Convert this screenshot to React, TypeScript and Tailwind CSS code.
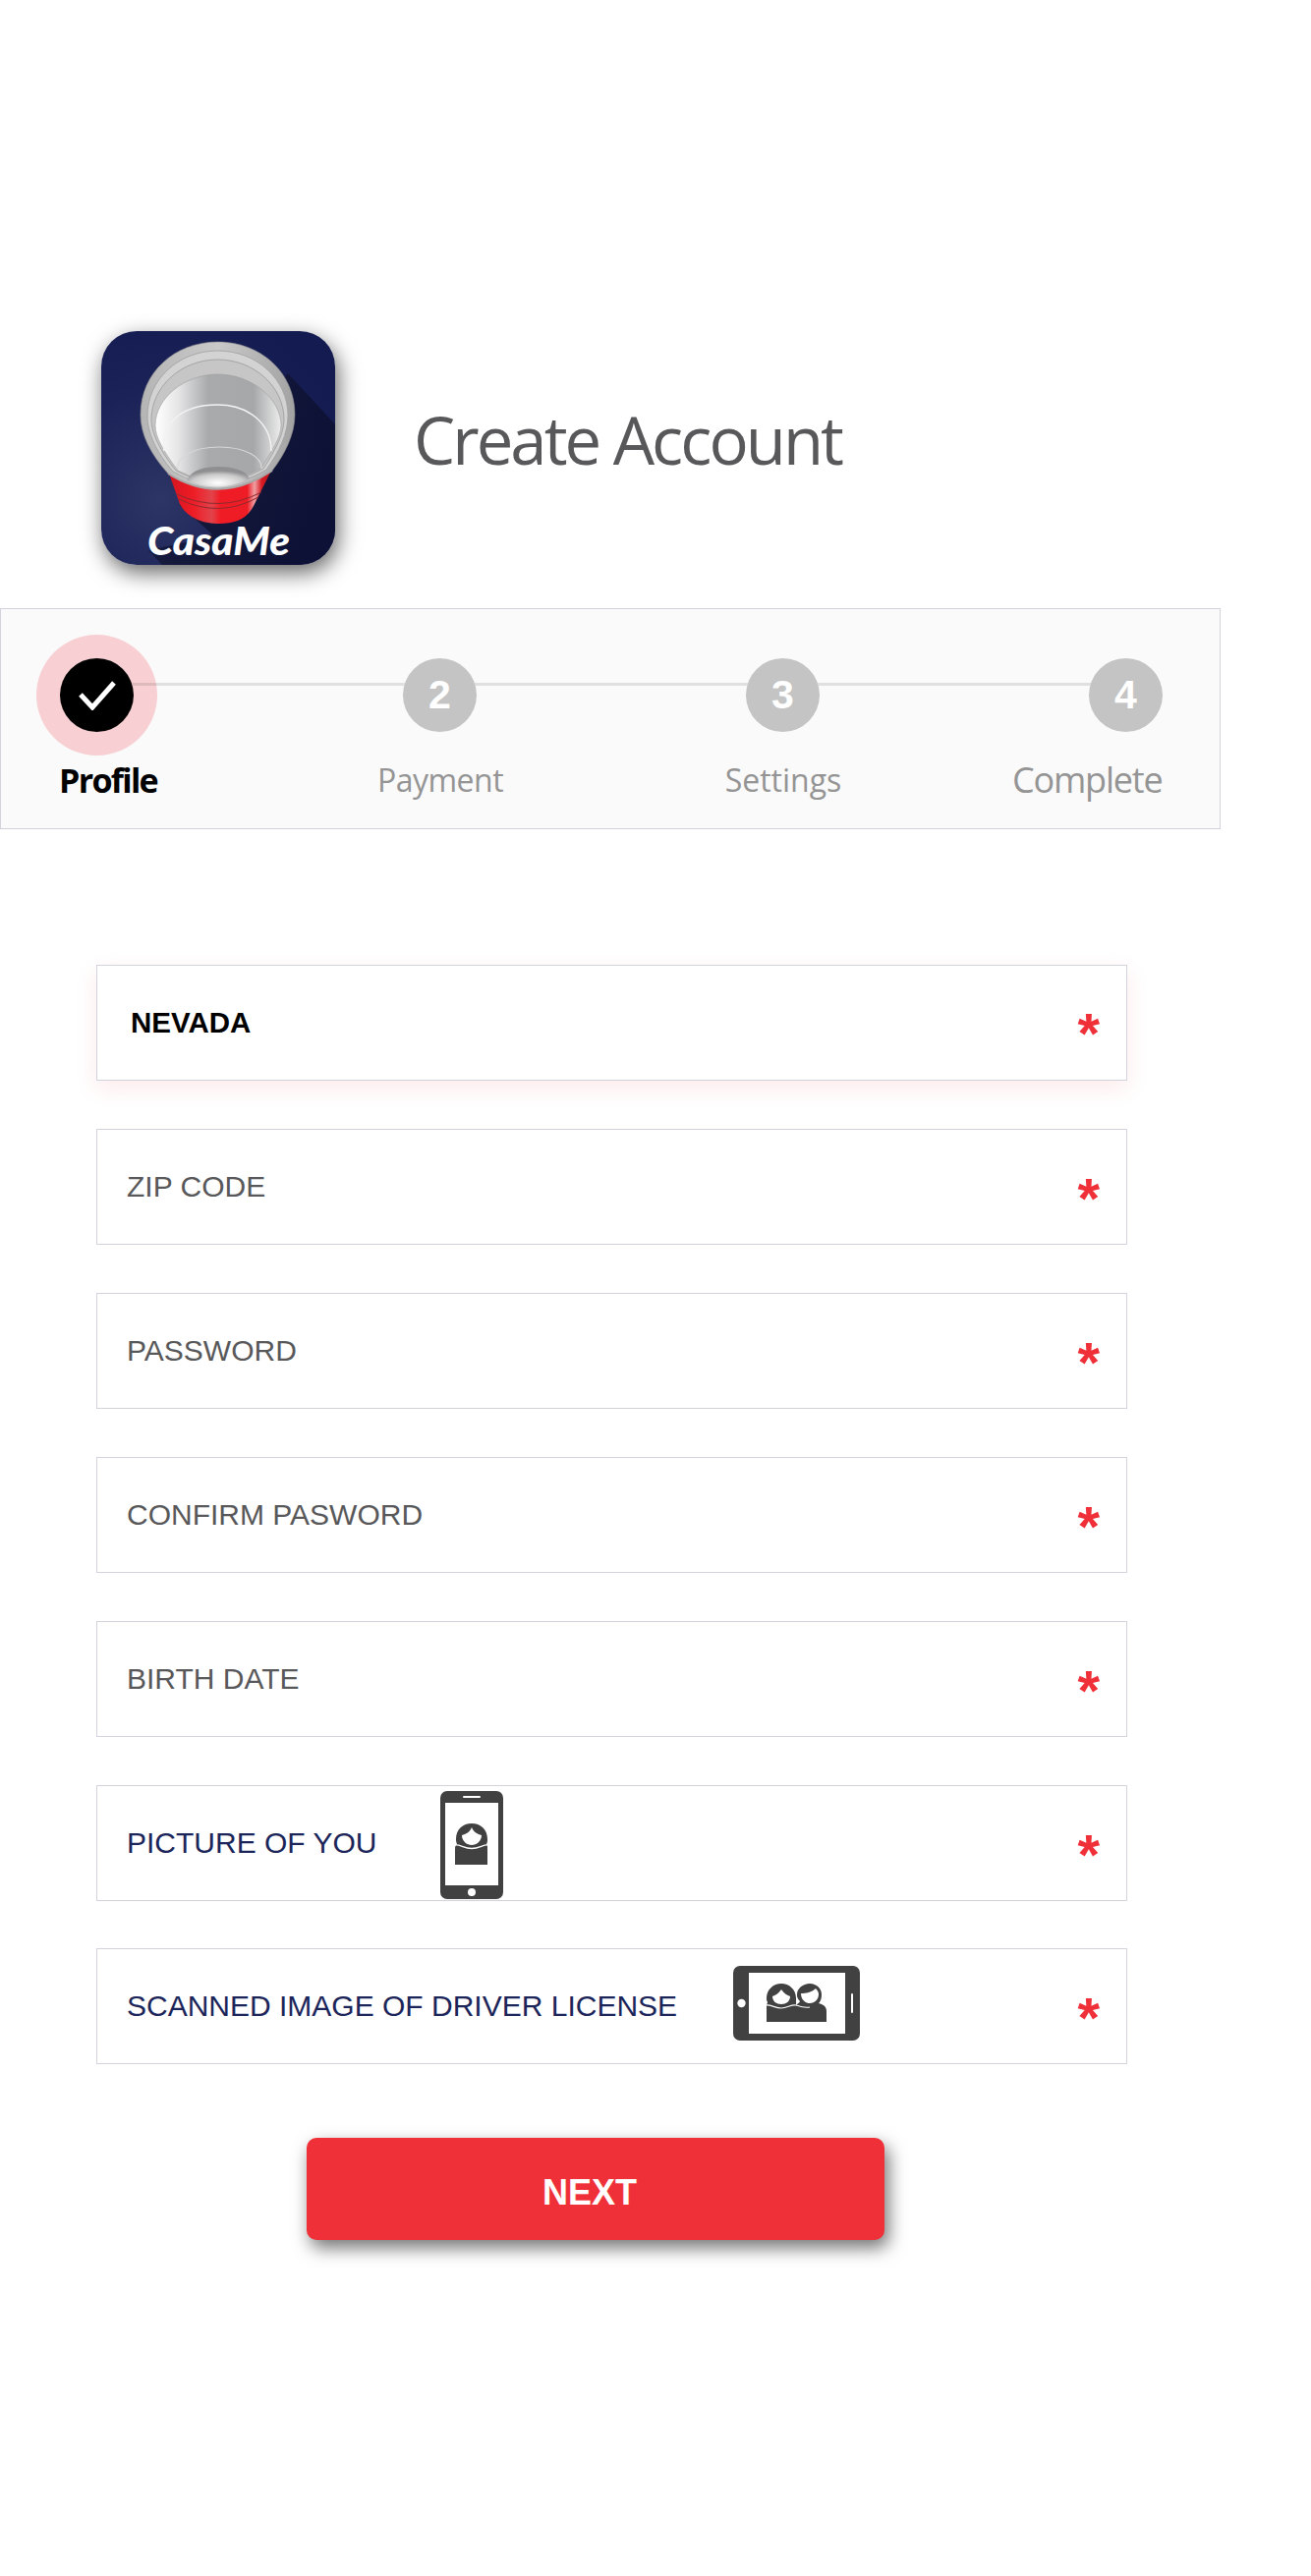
import React from "react";

const sans = "font-['Liberation_Sans',Arial,sans-serif]";
const humanist = "font-['Open_Sans','Noto_Sans',sans-serif]";

function Logo() {
  return (
    <svg width="238" height="238" viewBox="0 0 238 238" className="block">
      <defs>
        <radialGradient id="bg" cx="25%" cy="72%" r="85%">
          <stop offset="0%" stopColor="#2d3566" />
          <stop offset="55%" stopColor="#1a2257" />
          <stop offset="100%" stopColor="#141b50" />
        </radialGradient>
        <linearGradient id="sh" x1="0" y1="0" x2="1" y2="0.3">
          <stop offset="0%" stopColor="#1a1f40" />
          <stop offset="100%" stopColor="#0d1135" />
        </linearGradient>
        <linearGradient id="inner" x1="0" y1="0" x2="1" y2="0">
          <stop offset="0%" stopColor="#ffffff" />
          <stop offset="18%" stopColor="#e6e6e7" />
          <stop offset="42%" stopColor="#a9aaac" />
          <stop offset="78%" stopColor="#a6a7a9" />
          <stop offset="100%" stopColor="#ededed" />
        </linearGradient>
        <linearGradient id="rim" x1="0" y1="0" x2="1" y2="0">
          <stop offset="0%" stopColor="#b5b5b5" />
          <stop offset="50%" stopColor="#c9c9c9" />
          <stop offset="100%" stopColor="#a3a3a3" />
        </linearGradient>
        <linearGradient id="red" x1="0" y1="0" x2="1" y2="0">
          <stop offset="0%" stopColor="#d3151f" />
          <stop offset="24%" stopColor="#ee1c25" />
          <stop offset="42%" stopColor="#e2434b" />
          <stop offset="50%" stopColor="#f01c25" />
          <stop offset="76%" stopColor="#ee1c25" />
          <stop offset="83%" stopColor="#f0a0a4" />
          <stop offset="90%" stopColor="#d81a22" />
          <stop offset="100%" stopColor="#b9141c" />
        </linearGradient>
        <radialGradient id="bottom" cx="50%" cy="80%" r="60%">
          <stop offset="0%" stopColor="#ffffff" />
          <stop offset="70%" stopColor="#c9c9ca" />
          <stop offset="100%" stopColor="#8f8f91" />
        </radialGradient>
        <clipPath id="clip">
          <rect width="238" height="238" rx="36" />
        </clipPath>
      </defs>
      <g clipPath="url(#clip)">
        <rect width="238" height="238" fill="url(#bg)" />
        <polygon points="190,43 238,95 238,238 62,238 48,223 100,212 113,207 80,177" fill="url(#sh)" />
        <path d="M68 142 L80 176 C88 191 105 196 120 196 C135 196 148 192 155 178 L174 140 Z" fill="url(#red)" />
        <path d="M77 166 Q120 186 163 164" stroke="#8c2a30" strokeWidth="1" fill="none" />
        <path d="M79 171 Q120 191 160 169" stroke="#8c2a30" strokeWidth="1" fill="none" />
        <path d="M68 145 C50 125 40 105 40 85 C40 42 75 11 118.5 11 C162 11 197 42 197 85 C197 105 187 125 174 142 Q120 178 68 145 Z" fill="url(#rim)" stroke="#8f8f8f" strokeWidth="0.6" />
        <path d="M73 143 C56 123 47 104 47 86 C47 50 78 20 118.5 20 C159 20 190 50 190 86 C190 104 181 123 168 141 Q120 170 73 143 Z" fill="#d3d3d3" stroke="#a0a0a0" strokeWidth="0.8" />
        <path d="M76 142 C60 122 51 104 51 90 C51 57 81 29 118.5 29 C156 29 186 57 186 90 C186 104 177 122 165 140 Q120 166 76 142 Z" fill="#c6c6c6" stroke="#9a9a9a" strokeWidth="0.8" />
        <path d="M78 142 C63 122 55 108 55 96 C55 68 85 44 118.5 44 C152 44 183 68 183 96 C183 108 174 122 162 140 Q120 164 78 142 Z" fill="url(#inner)" stroke="#9c9c9c" strokeWidth="0.6" />
        <path d="M64 122 C60 94 82 75 118 75 C150 75 173 94 173 122" fill="none" stroke="#f2f2f2" strokeWidth="1.5" />
        <path d="M78 140 C76 128 94 118 120 118 C146 118 164 128 163 140" fill="none" stroke="#d8d8d8" strokeWidth="1.2" />
        <path d="M87 152 C92 141 105 138 119 138 C133 138 146 141 151 150 Q120 166 87 152 Z" fill="url(#bottom)" />
        <path d="M68 145 Q120 178 174 142" fill="none" stroke="#a8a8a8" strokeWidth="2" />
        <text x="47" y="228" fill="#ffffff" fontSize="40" fontWeight="900" fontStyle="italic" fontFamily="Lato, 'Open Sans', sans-serif" textLength="145" lengthAdjust="spacingAndGlyphs">CasaMe</text>
      </g>
    </svg>
  );
}

function PhoneIcon() {
  return (
    <svg width="64" height="110" viewBox="0 0 64 110" className="block shrink-0">
      <rect width="64" height="110" rx="7" fill="#414141" />
      <rect x="5" y="12" width="54" height="84" fill="#fff" />
      <rect x="23" y="5" width="18" height="2" rx="1" fill="#fff" />
      <circle cx="32" cy="103" r="4" fill="#fff" />
      <path d="M15 75 V58 C15 56 16 55 17 54 C16 52 16 50 16 49 C16 39 23 33 32 33 C41 33 48 39 48 49 C48 51 48 52 47 54 C48 55 48 56 48 58 V75 Z" fill="#414141" />
      <path d="M22 45 C26 44 30 42 32 37 C34 42 38 44 42 45 C42 51 37 55 32 55 C27 55 22 51 22 45 Z" fill="#fff" />
      <path d="M15 55 C20 54 24 58.5 32 58.5 C40 58.5 44 54 49 55" fill="none" stroke="#fff" strokeWidth="1.4" />
    </svg>
  );
}

function TabletIcon() {
  return (
    <svg width="129" height="76" viewBox="0 0 129 76" className="block shrink-0">
      <rect width="129" height="76" rx="7" fill="#414141" />
      <rect x="16" y="7" width="98" height="62" fill="#fff" />
      <circle cx="8.5" cy="38" r="4.2" fill="#fff" />
      <rect x="120" y="28" width="2" height="20" rx="1" fill="#fff" />
      <path d="M34 57 V40 C34 39 35 38 35 37 C34 35 34 34 34 33 C34 24 41 18 49 18 C57 18 64 24 64 33 V40 C66 38 68 37 68 36 C65 33 65 31 65 29 C65 23 71 18 78 18 C85 18 90 23 90 29 C90 33 89 36 87 38 C91 39 95 41 95 46 V57 Z" fill="#414141" />
      <path d="M40 31 C43 30 46 28 49 24 C52 28 55 30 58 31 C58 36 54 39 49 39 C44 39 40 36 40 31 Z" fill="#fff" />
      <path d="M69 28 C74 28 80 27 84 23 C86 25 87 27 87 29 C87 34 83 38 78 38 C73 38 69 34 69 28 Z" fill="#fff" />
      <path d="M33 40 C38 39 43 43 49 43 C55 43 59 39 64 40 C67 41 72 43 78 42" fill="none" stroke="#fff" strokeWidth="1.2" />
    </svg>
  );
}

function Star({ className = "" }: { className?: string }) {
  return (
    <span className={`${sans} ml-auto h-[40px] text-[58px] font-bold leading-[64px] text-[#ef3038] ${className}`}>*</span>
  );
}

function Field({ label, tone = "text-[#58585a]", className = "", children }: { label: string; tone?: string; className?: string; children?: React.ReactNode }) {
  return (
    <div className={`flex h-[118px] items-center border border-[#d3d3de] bg-white pl-[30px] pr-[27px] ${className}`}>
      <span className={`${sans} whitespace-nowrap text-[30px] leading-none ${tone}`}>{label}</span>
      {children}
      <Star />
    </div>
  );
}

function Dot({ n }: { n: string }) {
  return (
    <div className={`${sans} relative flex h-[75px] w-[75px] items-center justify-center rounded-full bg-[#c4c4c4] text-[41px] font-bold text-white`}>
      {n}
    </div>
  );
}

export default function App() {
  return (
    <div className="h-[2622px] w-[1334px] overflow-hidden bg-white pt-[337px]">
      <header className="flex h-[238px] items-center pl-[103px]">
        <div className="rounded-[36px] shadow-[3px_8px_22px_rgba(0,0,0,0.6)]">
          <Logo />
        </div>
        <h1 className={`${humanist} ml-[80px] mb-[18px] text-[67px] font-normal leading-none tracking-[-2.95px] text-[#58585a]`}>Create Account</h1>
      </header>

      <section className="relative mt-[44px] h-[225px] w-[1242px] border border-[#d3d3de] bg-[#fafafa] pl-[59px] pt-[50px]">
        <div className="absolute left-[36px] top-[26px] h-[123px] w-[123px] rounded-full bg-[#f8d0d3]" />
        <div className="absolute left-[98px] right-[96px] top-[75px] h-[3px] bg-[#0000001a]" />
        <div className="relative ml-px flex w-[1122px] justify-between">
          <div className="flex h-[75px] w-[75px] items-center justify-center rounded-full bg-black">
            <svg width="40" height="30" viewBox="0 0 40 30" fill="none">
              <path d="M3 14 L15 27 L37 2" stroke="#fff" strokeWidth="5" />
            </svg>
          </div>
          <Dot n="2" />
          <Dot n="3" />
          <Dot n="4" />
        </div>
        <div className={`${humanist} relative mt-[24px] flex h-[50px] items-center text-[#949494]`}>
          <span className="w-[103px] whitespace-nowrap text-[34px] font-bold leading-none tracking-[-1.7px] text-black">Profile</span>
          <span className="ml-[185px] w-[200px] text-center text-[32px] leading-none tracking-[-0.5px]">Payment</span>
          <span className="ml-[149px] w-[200px] text-center text-[32px] leading-none tracking-[0px]">Settings</span>
          <span className="ml-[133px] whitespace-nowrap text-[36px] leading-none tracking-[-1.2px]">Complete</span>
        </div>
      </section>

      <form className="ml-[98px] mt-[138px] flex w-[1049px] flex-col gap-[49px]">
        <div className="flex h-[118px] items-center border border-[#d3d3de] bg-white pl-[34px] pr-[27px] shadow-[0_8px_22px_rgba(239,48,56,0.1)]">
          <span className={`${sans} text-[29.5px] font-bold leading-none text-black`}>NEVADA</span>
          <Star className="-mt-[3px]" />
        </div>
        <Field label="ZIP CODE" />
        <Field label="PASSWORD" />
        <Field label="CONFIRM PASWORD" />
        <Field label="BIRTH DATE" />
        <Field label="PICTURE OF YOU" tone="text-[#1b2559]">
          <span className="ml-[65px] mt-[4px]"><PhoneIcon /></span>
        </Field>
        <Field label="SCANNED IMAGE OF DRIVER LICENSE" tone="text-[#1b2559]" className="-mt-px">
          <span className="mb-[6px] ml-[57px]"><TabletIcon /></span>
        </Field>
      </form>

      <button className={`${sans} ml-[312px] mt-[75px] flex h-[104px] w-[588px] items-center justify-center rounded-[10px] bg-[#ef3038] pr-[12px] pt-[8px] text-[36px] font-bold text-white shadow-[4px_8px_18px_rgba(0,0,0,0.55)]`}>
        NEXT
      </button>
    </div>
  );
}
